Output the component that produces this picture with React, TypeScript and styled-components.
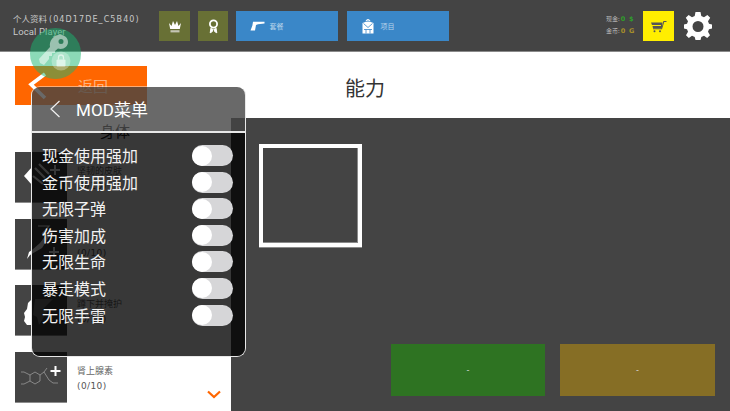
import React from "react";
import styled, { createGlobalStyle } from "styled-components";

const Global = createGlobalStyle`
  html, body { margin: 0; padding: 0; background: #fff; }
  body { font-family: "Noto Sans CJK SC", "Noto Sans", sans-serif; }
  * { box-sizing: border-box; }
`;

const Page = styled.div`
  position: relative;
  width: 730px;
  height: 411px;
  overflow: hidden;
  display: flex;
  flex-direction: column;
  background: #fff;
`;

const Header = styled.header`
  height: 52px;
  flex: none;
  background: #444;
  border-bottom: 1px solid #8a8a8a;
  display: flex;
  align-items: flex-start;
  padding: 11px 0 0 13px;
`;

const Profile = styled.div`
  width: 146px;
  display: flex;
  flex-direction: column;
  gap: 1px;
  padding-top: 2px;
  color: #c9c9c9;
  font-size: 8.5px;
  line-height: 11px;
  white-space: nowrap;
`;

const Wide = styled.span`
  font-family: "DejaVu Sans", sans-serif;
  font-size: 8px;
  letter-spacing: 1.1px;
`;

const LocalName = styled.span`
  font-family: "Roboto", sans-serif;
  font-size: 9.5px;
  letter-spacing: 0.1px;
`;

const SquareTile = styled.div<{ $bg: string; $w?: number; $mr?: number }>`
  width: ${(p) => p.$w ?? 31}px;
  height: 30px;
  margin-right: ${(p) => p.$mr ?? 8}px;
  background: ${(p) => p.$bg};
  display: flex;
  align-items: center;
  justify-content: center;
  flex: none;
`;

const BlueTile = styled.div`
  width: 102px;
  height: 30px;
  margin-right: 9px;
  background: #3a87c8;
  display: flex;
  align-items: center;
  flex: none;
  padding-left: 13px;
  gap: 4.5px;
  color: #b7d3ea;
  font-size: 7px;
`;

const BlueIcon = styled.span`
  width: 16px;
  display: flex;
  justify-content: center;
`;

const Wallet = styled.div`
  margin-left: 148px;
  width: 37px;
  padding-top: 3px;
  display: flex;
  flex-direction: column;
  gap: 2px;
  font-size: 6px;
  line-height: 10px;
  color: #bdbdbd;
  white-space: nowrap;
  flex: none;
`;

const Amount = styled.b<{ $c: string }>`
  font-family: "DejaVu Sans", sans-serif;
  font-size: 6.5px;
  font-weight: 700;
  letter-spacing: 0.8px;
  margin-left: 1px;
  color: ${(p) => p.$c};
`;

const GearBox = styled.div`
  margin-left: 10px;
  margin-top: 1px;
  width: 28px;
  height: 28px;
`;

const TitleRow = styled.div`
  height: 66px;
  flex: none;
  display: grid;
  grid-template-columns: 1fr auto 1fr;
  align-items: start;
  padding-top: 14px;
`;

const BackButton = styled.div`
  width: 132px;
  height: 39px;
  margin-left: 15px;
  background: #ff6600;
  display: flex;
  align-items: center;
  padding-left: 13px;
  color: #ffb380;
  font-size: 15px;
`;

const BackLabel = styled.span`
  margin-left: 30px;
`;

const PageTitle = styled.h1`
  margin: 7px 0 0;
  font-size: 20px;
  line-height: 30px;
  font-weight: 400;
  color: #333;
`;

const Content = styled.div`
  flex: 1;
  min-height: 0;
  display: grid;
  grid-template-columns: 231px 1fr;
  grid-template-rows: minmax(0, 1fr);
`;

const SideList = styled.div`
  padding-left: 15px;
  display: flex;
  flex-direction: column;
  overflow: hidden;
`;

const SideHeading = styled.div`
  height: 34px;
  flex: none;
  padding-left: 85px;
  font-size: 15px;
  line-height: 25px;
  color: #222;
`;

const Row = styled.div`
  height: 51px;
  margin-bottom: 15.5px;
  display: flex;
  position: relative;
  flex: none;
`;

const RowTile = styled.div`
  width: 52px;
  height: 51px;
  background: #444;
  border-bottom: 1px solid #8c8c8c;
  flex: none;
`;

const RowText = styled.div`
  margin-left: 10px;
  padding-top: 13px;
  display: flex;
  flex-direction: column;
  gap: 5px;
  color: #666;
  font-size: 9px;
  line-height: 11px;
`;

const Count = styled.span`
  font-family: "DejaVu Sans", sans-serif;
  font-size: 9px;
  letter-spacing: 0.4px;
  color: #555;
`;

const Chevron = styled.span`
  position: absolute;
  right: 10px;
  bottom: 4px;
  display: flex;
`;

const RightPanel = styled.div`
  background: #444;
  display: flex;
  flex-direction: column;
  justify-content: space-between;
  padding: 26px 15px 15px 28px;
`;

const Frame = styled.div`
  width: 103px;
  height: 103px;
  border: 4px solid #fff;
  box-shadow: inset -1px -1px 0 #8a8a8a, 0 1px 0 #8a8a8a;
`;

const Actions = styled.div`
  display: flex;
  justify-content: flex-end;
  gap: 15px;
`;

const Action = styled.div<{ $bg: string; $w: number }>`
  width: ${(p) => p.$w}px;
  height: 52px;
  background: ${(p) => p.$bg};
  color: #ddd;
  font-family: "Roboto", sans-serif;
  font-size: 9px;
  display: flex;
  align-items: center;
  justify-content: center;
`;

/* --- overlays --- */
const KeyBadge = styled.div`
  position: absolute;
  left: 30px;
  top: 28px;
  width: 50.5px;
  height: 50.5px;
  border-radius: 50%;
  background: rgba(24, 182, 112, 0.5);
  display: flex;
  align-items: center;
  justify-content: center;
`;

const Modal = styled.section`
  position: absolute;
  left: 31px;
  top: 86px;
  width: 215px;
  height: 271px;
  border: 1px solid #e8e8e8;
  border-top-color: rgba(255, 255, 255, 0.45);
  border-radius: 9px;
  overflow: hidden;
  display: flex;
  flex-direction: column;
`;

const ModalHead = styled.div`
  height: 46px;
  flex: none;
  background: rgba(68, 68, 68, 0.8);
  border-bottom: 2px solid #e8e8e8;
  display: flex;
  align-items: center;
  padding: 0 0 1px 17px;
  color: #fff;
  font-family: "Roboto", "Noto Sans CJK SC", sans-serif;
  font-size: 17px;
`;

const ModalTitle = styled.span`
  margin-left: 15px;
  letter-spacing: 0.1px;
`;

const ModalBody = styled.div`
  flex: 1;
  background: rgba(0, 0, 0, 0.78);
  padding: 12px 12px 0 10px;
  display: flex;
  flex-direction: column;
  gap: 5.6px;
`;

const ToggleRow = styled.div`
  height: 21px;
  display: flex;
  align-items: center;
  justify-content: space-between;
  color: #f2f2f2;
  font-size: 16px;
  line-height: 21px;
`;

const Track = styled.span`
  width: 41px;
  height: 21px;
  border-radius: 11px;
  background: #d6d6d8;
  display: flex;
  align-items: center;
`;

const Knob = styled.span`
  width: 20px;
  height: 20px;
  border-radius: 50%;
  background: #fff;
`;

const Crown = () => (
  <svg width="14" height="13" viewBox="0 0 14 13" fill="#fff">
    <path d="M1 3 L3.5 6 L5 1 L7 5 L9 1 L10.5 6 L13 3 L11.8 9 H2.2 Z" />
    <rect x="2.5" y="10.2" width="9" height="2.2" fill="#c4c4b4" />
  </svg>
);

const Medal = () => (
  <svg width="11" height="15" viewBox="0 0 11 15" fill="none">
    <circle cx="5.5" cy="5" r="3.6" stroke="#fff" strokeWidth="1.8" />
    <path d="M3 9 L2.2 13.8 L4.3 12.6 L5 10 M8 9 L8.8 13.8 L6.7 12.6 L6 10" stroke="#fff" strokeWidth="1" fill="#fff" />
  </svg>
);

const Gun = () => (
  <svg width="15" height="10" viewBox="0 0 15 10" fill="#fff">
    <path d="M3 0.8 H14.5 V2.6 L8 3.2 L6 4 L5 9.6 H0.5 L2.4 4.5 Z" />
  </svg>
);

const Pack = () => (
  <svg width="12" height="16" viewBox="0 0 12 16" fill="#fff">
    <path d="M3.5 3 Q6 -1 8.5 3 L8 3.4 Q6 1.4 4 3.4 Z" />
    <path d="M0.5 5 Q6 1.8 11.5 5 V15.5 H0.5 Z" />
    <path d="M1.5 5.5 L6 9.5 L10.5 5.5 M2 11.5 H10 M4 11.5 V15.5 M8 11.5 V15.5" stroke="#3a87c8" strokeWidth="0.8" fill="none" />
  </svg>
);

const Cart = () => (
  <svg width="16" height="13" viewBox="0 0 16 13" fill="#555">
    <path d="M0 2.5 H11.5 L10.8 8.2 H2 L1.5 6 H10 V5 H1 Z" />
    <path d="M11 9.2 H2 V8.2 H10.5 L12.4 1 H15.5 V2 H13.2 Z" />
    <circle cx="3.5" cy="11.3" r="1" />
    <circle cx="9" cy="11.3" r="1" />
  </svg>
);

const Gear = () => (
  <svg width="28" height="28" viewBox="0 0 28 28">
    <path
      fill="#fff"
      fillRule="evenodd"
      d="M11.5 1 H16.5 L17.3 5 L20 6.2 L23.4 3.9 L26.2 6.8 L24 10.2 L25 12.8 L28 13.6 V17.4 L25 18.2 L24 20.8 L26 24.2 L23.2 27 L20 24.8 L17.3 26 L16.5 29 H11.5 L10.7 26 L8 24.8 L4.8 27 L2 24.2 L4 20.8 L3 18.2 L0 17.4 V13.6 L3 12.8 L4 10.2 L1.8 6.8 L4.6 3.9 L8 6.2 L10.7 5 Z M14 10 A5.5 5.5 0 1 0 14 21 A5.5 5.5 0 1 0 14 10 Z"
      transform="translate(0 -1)"
    />
  </svg>
);

const BackArrow = () => (
  <svg width="20" height="30" viewBox="0 0 20 30" fill="none">
    <path d="M17 3 L3 13.5 L17 27" stroke="#fff" strokeWidth="3.6" />
  </svg>
);

const ThinBack = () => (
  <svg width="12" height="18" viewBox="0 0 12 18" fill="none">
    <path d="M10.5 1 L2 9 L10.5 17" stroke="#f0f0f0" strokeWidth="1.2" />
  </svg>
);

const KeyIcon = () => (
  <svg width="42" height="42" viewBox="0 0 42 42" fill="none">
    <path
      fill="rgba(255,255,255,0.52)"
      fillRule="evenodd"
      d="M24 3 C29 2 34 5 34 10 C34 15 29 18 24 16.5 L21 19 L21 21 L18 21 L18 24 L15 24 L15 27 L10 33 L6 31 L5 27 L16 15 C15 9 19 4 24 3 Z M27 7 A2.5 2.5 0 1 0 27 12 A2.5 2.5 0 1 0 27 7 Z"
    />
    <circle cx="27" cy="29" r="9.5" fill="rgba(255,255,255,0.3)" />
    <rect x="22.5" y="27.5" width="9" height="7" rx="1" fill="rgba(255,255,255,0.6)" />
    <path d="M24.5 27.5 V25.5 A2.5 2.5 0 0 1 29.5 25.5 V27.5" stroke="rgba(255,255,255,0.6)" strokeWidth="1.3" />
  </svg>
);

const Plus = ({ x, y }: { x: number; y: number }) => (
  <path d={`M${x - 5} ${y} H${x + 5} M${x} ${y - 5} V${y + 5}`} stroke="#fff" strokeWidth="2" />
);

const RowGlyph = ({ kind }: { kind: number }) => (
  <svg width="52" height="50" viewBox="0 0 52 50" fill="none">
    {kind === 0 && (
      <>
        <path fill="#fff" d="M9 24 L17 15 L17 33 Z" />
        <path d="M20 16 L30 26 M24 12 L34 22 M18 24 L28 32" stroke="#fff" strokeWidth="2.2" />
        <Plus x={40} y={18} />
      </>
    )}
    {kind === 1 && (
      <>
        <path fill="#fff" d="M12 40 L14 33 L17 31 L25 24 L36 9 L36 15 L27 29 L15 36 Z" />
        <path d="M23 7 H34 L27 15" stroke="#fff" strokeWidth="1.2" />
        <Plus x={39} y={33} />
      </>
    )}
    {kind === 2 && (
      <>
        <path fill="#fff" d="M17 14 L13 18 L12 24 L9 28 L10 32 L9 36 L12 40 L17 40 Z" />
        <path d="M20 14 H38 L28 24 L34 24 L24 40 L22 32 L18 30 Z" fill="#fff" opacity="0.3" />
      </>
    )}
    {kind === 3 && (
      <>
        <g stroke="#b5b5b5" strokeWidth="0.6">
          <path d="M15 23 L20 20 L25 23 V29 L20 32 L15 29 Z" />
          <path d="M15 23 L9 20 H6 M15 29 L9 32 H6 M25 23 L29 20 L32 16 M29 20 L34 28 L38 31 H43" />
        </g>
        <Plus x={40.5} y={19} />
      </>
    )}
  </svg>
);

const DownChevron = () => (
  <svg width="14" height="9" viewBox="0 0 14 9" fill="none">
    <path d="M1 1.5 L7 7 L13 1.5" stroke="#ff6600" strokeWidth="2.2" />
  </svg>
);

const mods = ["现金使用强加", "金币使用强加", "无限子弹", "伤害加成", "无限生命", "暴走模式", "无限手雷"];

const rows = [
  { title: "坚韧的皮肤", count: "(0/10)" },
  { title: "", count: "(0/10)" },
  { title: "蹲下并掩护", count: "(0/10)" },
  { title: "肾上腺素", count: "(0/10)" },
];

export default function App() {
  return (
    <Page>
      <Global />
      <Header>
        <Profile>
          <span>
            个人资料 <Wide>(04D17DE_C5B40)</Wide>
          </span>
          <LocalName>Local Player</LocalName>
        </Profile>
        <SquareTile $bg="#687035"><Crown /></SquareTile>
        <SquareTile $bg="#687035" $w={30}><Medal /></SquareTile>
        <BlueTile><BlueIcon><Gun /></BlueIcon>套餐</BlueTile>
        <BlueTile><BlueIcon><Pack /></BlueIcon>项目</BlueTile>
        <Wallet>
          <span>现金:<Amount $c="#2f9e2a">0 $</Amount></span>
          <span>金币:<Amount $c="#a8902a">0 G</Amount></span>
        </Wallet>
        <SquareTile $bg="#ffee00" $mr={0}><Cart /></SquareTile>
        <GearBox><Gear /></GearBox>
      </Header>
      <TitleRow>
        <BackButton>
          <BackArrow />
          <BackLabel>返回</BackLabel>
        </BackButton>
        <PageTitle>能力</PageTitle>
        <span />
      </TitleRow>
      <Content>
        <SideList>
          <SideHeading>身体</SideHeading>
          {rows.map((r, i) => (
            <Row key={i}>
              <RowTile><RowGlyph kind={i} /></RowTile>
              <RowText>
                <span>{r.title || "\u00a0"}</span>
                <Count>{r.count}</Count>
              </RowText>
              {i === 3 && <Chevron><DownChevron /></Chevron>}
            </Row>
          ))}
        </SideList>
        <RightPanel>
          <Frame />
          <Actions>
            <Action $bg="#2e7322" $w={154}>-</Action>
            <Action $bg="#866e25" $w={155}>-</Action>
          </Actions>
        </RightPanel>
      </Content>
      <KeyBadge><KeyIcon /></KeyBadge>
      <Modal>
        <ModalHead>
          <ThinBack />
          <ModalTitle>MOD菜单</ModalTitle>
        </ModalHead>
        <ModalBody>
          {mods.map((m) => (
            <ToggleRow key={m}>
              <span>{m}</span>
              <Track><Knob /></Track>
            </ToggleRow>
          ))}
        </ModalBody>
      </Modal>
    </Page>
  );
}
